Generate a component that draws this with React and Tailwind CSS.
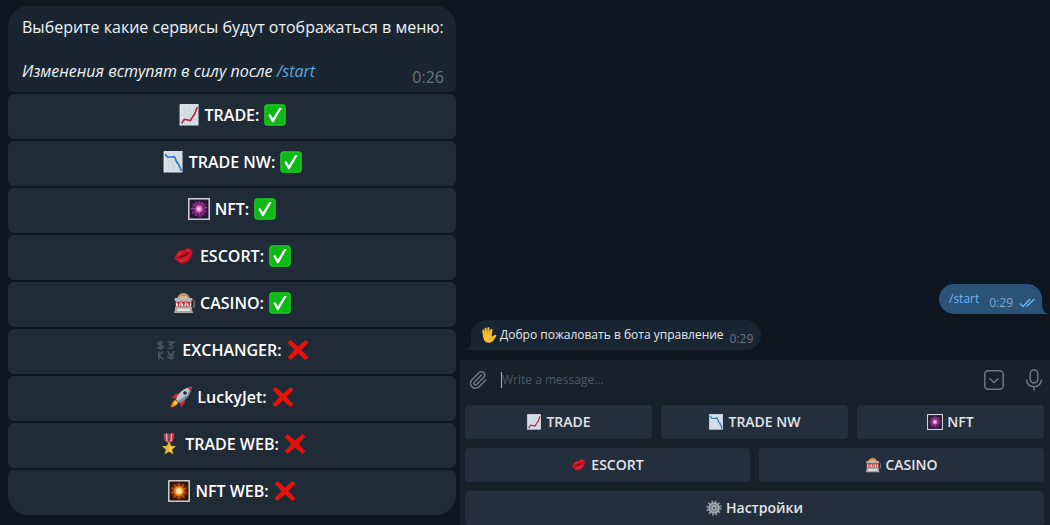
import { Paperclip } from 'lucide-react';

const ChartFrame = ({ children }) => (
  <>
    <rect x="2" y="0.5" width="18.5" height="21" fill="#d5dee7" />
    <path d="M2 5.5h18.5M2 10.5h18.5M2 15.5h18.5M6.5 .5v21M11.5 .5v21M16 .5v21" stroke="#c9d4de" strokeWidth="0.6" />
    <path d="M2 21.5V.5h18.5" fill="none" stroke="#eef3f6" strokeWidth="0.8" />
    {children}
  </>
);

const ChartUp = () => (
  <ChartFrame>
    <path d="M3.500 19.500l3-4.200 6 1.300 2.500-4.400 1.500-1.700L19.300 3" fill="none" stroke="#bf1f35" strokeWidth="1.600" />
  </ChartFrame>
);

const ChartDown = () => (
  <ChartFrame>
    <path d="M3 3l2.600 3.200 7-.400 2.200 5.600 1.600 1.600 3 7" fill="none" stroke="#2e6fc0" strokeWidth="1.600" />
  </ChartFrame>
);

const Fireworks = () => (
  <>
    <rect x="0.8" y="0.8" width="20.4" height="20.4" fill="#271737" stroke="#dfe1e8" strokeWidth="1.4" />
    <circle cx="11" cy="11" r="7.5" fill="#71266f" opacity="0.75" />
    <path
      d="M11 11V3M11 11l3.5-7M11 11l6.4-5.500M11 11l8-1.500M11 11l7.500 3M11 11l5 6.500M11 11l1.200 8M11 11l-4 7M11 11l-7 4.500M11 11l-8-.5M11 11L4.500 5.800M11 11L7.400 3.500"
      stroke="#b54aa9"
      strokeWidth="0.9"
    />
    <circle cx="11" cy="11" r="3.4" fill="#e56cc5" />
    <circle cx="11" cy="11" r="1.7" fill="#ffe0f5" />
  </>
);

const Sparks = () => (
  <>
    <rect x="0.8" y="0.8" width="20.4" height="20.4" fill="#35150b" stroke="#dedbd7" strokeWidth="1.4" />
    <circle cx="11" cy="11" r="8" fill="#6e2c0c" />
    <path
      d="M11 2.5l1.600 4.200 3.800-3.200-1.400 4.600 4.600-.6-3.600 3.200 3.800 2.700-4.700.4 2 4.800-4.300-2.600L11 20l-1.800-4.200-4.200 2.800 1.600-4.800-4.200-.8 3.700-2.400-3.500-3.200 4.600.3L5.600 3.500l3.800 3z"
      fill="#b7510f"
    />
    <circle cx="11" cy="11" r="4.8" fill="#f18a20" />
    <circle cx="11" cy="11" r="2.9" fill="#ffe9a4" />
  </>
);

const Lips = () => (
  <>
    <path
      d="M1.200 13.400C3 11.500 3.200 8 5.600 6.200c1.700-1.300 3.300-.7 4.400-.9C11.600 4.900 12.600 3 15 3.200c1.800.1 2.400 1.700 4.900 2.200-1 1.800-.7 4.300-2.100 7.200-1.700 3.600-5.200 6-9 5.900-3.900-.2-4.200-3.400-7.600-5.100z"
      fill="#cb1526"
    />
    <path d="M4.500 12.800c2.500-.6 3.500-2.500 5.500-2.700 2-.2 3.500-2 6.500-3.300-1.300 2.200-3 3.900-5.300 4.600-2.400.7-4.200 1.500-6.700 1.400z" fill="#6b0811" />
    <path d="M7 15.800c3.200.3 6.200-1.200 8-4M6.500 8.800l2-1.300M14 5.800l1.800-.8M5 10.200l1-.9" stroke="#ef6069" strokeWidth="0.900" fill="none" />
    <path d="M9 17.500v-2M12 16.800l-.6-2M14.800 15l-1-1.600" stroke="#98101c" strokeWidth="0.700" />
  </>
);

const Slots = () => (
  <>
    <path d="M4 6.500C5 2.800 8 1 10.500 1s5.500 1.800 6.500 5.500z" fill="#c98f62" />
    <path d="M7 4.800h7M6 6h9" stroke="#f0cb9a" strokeWidth="0.9" />
    <rect x="1.500" y="6" width="18" height="3" rx="1" fill="#b9b7b8" />
    <rect x="2" y="9" width="17" height="6" fill="#8d2a2c" />
    <rect x="3" y="9.500" width="4.500" height="5" fill="#f7f2ef" />
    <rect x="8.300" y="9.500" width="4.500" height="5" fill="#f7f2ef" />
    <rect x="13.600" y="9.500" width="4.500" height="5" fill="#f7f2ef" />
    <path d="M3.600 10.700h3.200M5.500 10.700v3.300M8.900 10.700h3.200M10.800 10.700v3.300M14.200 10.700h3.200M16.100 10.700v3.300" stroke="#d0212b" strokeWidth="1.400" fill="none" />
    <path d="M2 15h17v2.500l1 3.500H1l1-3.500z" fill="#a9a6a8" />
    <rect x="4" y="16.500" width="13" height="2.500" fill="#e2dfdd" />
    <path d="M19.500 15h1.700V9.500" stroke="#93979d" strokeWidth="1" fill="none" />
    <circle cx="21" cy="9" r="1" fill="#d33234" />
  </>
);

const Currency = () => (
  <g fill="none" stroke="#4a535b" strokeWidth="1.700">
    <path d="M8 4C6.800 2.600 3 2.800 3 4.600 3 6.600 8 5.600 8 7.800 8 9.700 4 9.800 2.600 8.300M5.500 1.500v9.500" />
    <path d="M12.500 3h6l-3.500 2.800c4 .2 3.500 4.500-2 3.200" />
    <path d="M3.800 12.500v8M8 12.500l-4 4 4.200 4" />
    <path d="M12.500 12l3.500 4.500 3.500-4.500M16 16.500V21M12.500 16.500h7M12.500 18.800h7" />
  </g>
);

const Rocket = () => (
  <>
    <path d="M6.500 13l-5-1.500L6 7.500l4 .5z" fill="#cf2735" />
    <path d="M10 16.500l1 5 4-5-.5-4z" fill="#cf2735" />
    <path d="M5.500 13.500C3 14.500 1 18 .7 21.500c3.500-.5 6.500-2 7.800-4.800z" fill="#f17020" />
    <path d="M6 14.800c-1.500.8-2.700 2.500-3 4.500 2-.3 3.600-1.300 4.600-2.800z" fill="#ffd43b" />
    <path d="M6 13.500C8 7 13 2 21.500.7 21 8.500 16 14 9.500 17z" fill="#b7c6d1" />
    <path d="M7.800 15.300C13.500 12 18 8 21.500.7 21 8.500 16 14 9.500 17z" fill="#768a99" />
    <path d="M17.500 1.700c1.200-.5 2.500-.8 4-1-.2 1.500-.5 2.800-1 4z" fill="#cf2735" />
    <circle cx="15" cy="7" r="2.400" fill="#222f3b" stroke="#eef3f5" strokeWidth="0.900" />
  </>
);

const Medal = () => (
  <>
    <path d="M5.500 .5h11l-1 7L11 11 6.500 7.500z" fill="#cf3544" />
    <path d="M8.500 .5l.5 8M13.500 .5l-.5 8" stroke="#efd6da" strokeWidth="0.900" />
    <path d="M11 .5v10" stroke="#3c5185" strokeWidth="1.300" />
    <path d="M11 8l2 4.800 5 .4-3.800 3.300 1.200 5-4.400-2.700-4.400 2.700 1.200-5L4 13.200l5-.4z" fill="#e8b52c" />
    <path d="M11 10.500l1.200 3.500 3 .4-2.400 2 .7 2.800-2.500-1.600z" fill="#f9da62" />
  </>
);

const CheckBadge = () => (
  <>
    <rect x="0.300" y="0.300" width="21.400" height="21.400" rx="3" fill="#0cb814" />
    <rect x="1" y="1" width="20" height="20" rx="2.500" fill="none" stroke="#2fc832" strokeWidth="0.900" />
    <path d="M4.300 11l1.900-1 2.700 4.300L15.300 4h2.500L9.500 18.200H8.200z" fill="#fff" />
  </>
);

const CrossMark = () => (
  <path d="M3.600 1L11 7.600 18.400 1 21.500 3.800 14.500 11l7 7.200-3.100 2.800L11 14.400 3.600 21 .5 18.200 7.500 11l-7-7.200z" fill="#e4110d" />
);

const Hand = () => (
  <>
    <path
      d="M2.500 10L1.600 5.200c-.3-2 2.300-2.300 2.700-.5l1 3.700-.5-5.800c-.1-2 2.600-2.200 2.900-.2l.8 5.200.2-6c.1-1.900 2.900-1.900 2.900 0l.2 6 1.200-4.300c.6-1.700 3-1.100 2.700.7L14.800 12l.9 1.500 2.600-2.500c1.500-1.200 3.500.3 2.400 1.900-2.700 3.600-4.200 8.400-9.600 8.700-5.700.2-8-4-8.600-11.600z"
      fill="#fbc02f"
    />
    <path d="M5.500 10.500V8M8.800 10V7.500M12 10.500V8M15.500 13.800c-2.300.5-4 1.700-4.500 3.700" stroke="#da8e14" strokeWidth="0.900" fill="none" />
  </>
);

const Gear = () => (
  <>
    <circle cx="11" cy="11" r="9" fill="none" stroke="#8d969e" strokeWidth="3" strokeDasharray="2.300 2.412" />
    <circle cx="11" cy="11" r="6.800" fill="#7b848c" stroke="#a5adb3" strokeWidth="2.200" />
    <circle cx="11" cy="11" r="2.600" fill="#3b4650" stroke="#b5bbc0" strokeWidth="1.500" />
  </>
);

const Glyph = ({ of: Shape, className }) => (
  <svg viewBox="0 0 22 22" className={className} aria-hidden="true">
    <Shape />
  </svg>
);

const services = [
  { name: 'TRADE', icon: ChartUp, on: true },
  { name: 'TRADE NW', icon: ChartDown, on: true },
  { name: 'NFT', icon: Fireworks, on: true },
  { name: 'ESCORT', icon: Lips, on: true },
  { name: 'CASINO', icon: Slots, on: true },
  { name: 'EXCHANGER', icon: Currency, on: false },
  { name: 'LuckyJet', icon: Rocket, on: false },
  { name: 'TRADE WEB', icon: Medal, on: false },
  { name: 'NFT WEB', icon: Sparks, on: false },
];

const ServiceButton = ({ service }) => (
  <button
    type="button"
    className="flex h-[45px] w-full items-center justify-center gap-[5px] rounded-md bg-[#1f2c38] pb-1 text-base font-semibold text-white last:rounded-b-[20px]"
  >
    <Glyph of={service.icon} className="size-[22px]" />
    <span>{service.name}:</span>
    <Glyph of={service.on ? CheckBadge : CrossMark} className="size-[22px]" />
  </button>
);

const ServicePicker = () => (
  <section className="flex flex-col gap-0.5 pt-1.5 pr-1 pb-2.5 pl-2">
    {/* Message bubble */}
    <div className="flex items-end justify-between rounded-t-[20px] rounded-b-md bg-[#192632] pt-2.5 pr-3 pb-1 pl-3.5 text-base leading-[22px] text-[#f0f2f4]">
      <div className="pb-1.5">
        <p className="whitespace-nowrap">Выберите какие сервисы будут отображаться в меню:</p>
        <p className="mt-[22px] italic">
          Изменения вступят в силу после{' '}
          <a href="#start" className="text-[#62a8dc]">/start</a>
        </p>
      </div>
      <time className="-ml-12 text-[#677683]">0:26</time>
    </div>

    {/* Inline keyboard */}
    <div className="flex flex-col gap-0.5">
      {services.map((service) => (
        <ServiceButton key={service.name} service={service} />
      ))}
    </div>
  </section>
);

const KeyButton = ({ icon, children }) => (
  <button
    type="button"
    className="flex h-[34px] flex-1 items-center justify-center gap-1 rounded bg-[#242f3d] text-sm font-semibold text-[#e1e5e9]"
  >
    <Glyph of={icon} className="size-4" />
    <span>{children}</span>
  </button>
);

const Messages = () => (
  <div className="flex flex-1 flex-col justify-end gap-1.5 px-2 pb-2.5 text-xs">
    <div className="relative flex h-[30px] items-center self-end rounded-[15px] rounded-br-none bg-[#2b5278] pr-1.5 pl-2.5">
      <a href="#start" className="text-[#6fb6ec]">/start</a>
      <time className="ml-2.5 pt-2 text-[#7da8d3]">0:29</time>
      <svg viewBox="0 0 17 10" className="mt-2 ml-1.5 h-2.5 w-[17px]" fill="none" stroke="#66b7f0" strokeWidth="1.500">
        <path d="M1 5.500l3 3L11 1M7.500 8.500L15.500 1" />
      </svg>
      <svg viewBox="0 0 6 12" className="absolute bottom-0 left-full h-3 w-1.5" fill="#2b5278">
        <path d="M0 0c0 6 1 10 6 12H0z" />
      </svg>
    </div>

    <div className="relative ml-[3px] flex h-[30px] items-center self-start rounded-[15px] rounded-bl-none bg-[#182533] pr-2 pl-2.5">
      <svg viewBox="0 0 6 12" className="absolute right-full bottom-0 h-3 w-1.5" fill="#182533">
        <path d="M6 0c0 6-1 10-6 12h6z" />
      </svg>
      <Glyph of={Hand} className="size-4" />
      <p className="ml-[3px] text-[#e3e8ec]">Добро пожаловать в бота управление</p>
      <time className="ml-1.5 pt-2 text-[#677683]">0:29</time>
    </div>
  </div>
);

const Composer = () => (
  <div className="flex h-10 items-center pr-1.5 pl-2 text-[#6c7883]">
    <button type="button" aria-label="Attach file">
      <Paperclip className="size-5" strokeWidth={1.8} />
    </button>
    <input
      type="text"
      aria-label="Message"
      placeholder="Write a message…"
      className="ml-[13px] h-4 min-w-0 flex-1 border-l border-[#aab3bb] text-xs text-white outline-none placeholder:text-[#4d5863]"
    />
    <button type="button" aria-label="Bot keyboard">
      <svg viewBox="0 0 20 20" className="size-5" fill="none" stroke="currentColor" strokeWidth="1.500">
        <rect x="0.800" y="0.800" width="18.400" height="18.400" rx="3.500" />
        <path d="M5.500 8.500l4.500 4 4.500-4" />
      </svg>
    </button>
    <button type="button" aria-label="Record voice message" className="ml-5">
      <svg viewBox="0 0 20 22" className="h-[22px] w-5" fill="none" stroke="currentColor" strokeWidth="1.500">
        <rect x="6.200" y="1" width="7.600" height="13" rx="3.800" />
        <path d="M2.500 10.500c0 9.500 15 9.500 15 0M10 17.800V21.500" />
      </svg>
    </button>
  </div>
);

const Chat = () => (
  <section className="flex min-w-0 flex-col">
    <Messages />
    <div className="bg-[#17212b]">
      <Composer />
      {/* Reply keyboard */}
      <div className="flex flex-col gap-[9px] pt-[5px] pr-1.5 pl-[5px]">
        <div className="flex gap-[9px]">
          <KeyButton icon={ChartUp}>TRADE</KeyButton>
          <KeyButton icon={ChartDown}>TRADE NW</KeyButton>
          <KeyButton icon={Fireworks}>NFT</KeyButton>
        </div>
        <div className="flex gap-[9px]">
          <KeyButton icon={Lips}>ESCORT</KeyButton>
          <KeyButton icon={Slots}>CASINO</KeyButton>
        </div>
        <div className="flex">
          <KeyButton icon={Gear}>Настройки</KeyButton>
        </div>
      </div>
    </div>
  </section>
);

const App = () => (
  <main className="grid min-h-screen grid-cols-[46fr_59fr] bg-[#0e1621] font-['Open_Sans','Noto_Sans',sans-serif]">
    <ServicePicker />
    <Chat />
  </main>
);

export default App;
